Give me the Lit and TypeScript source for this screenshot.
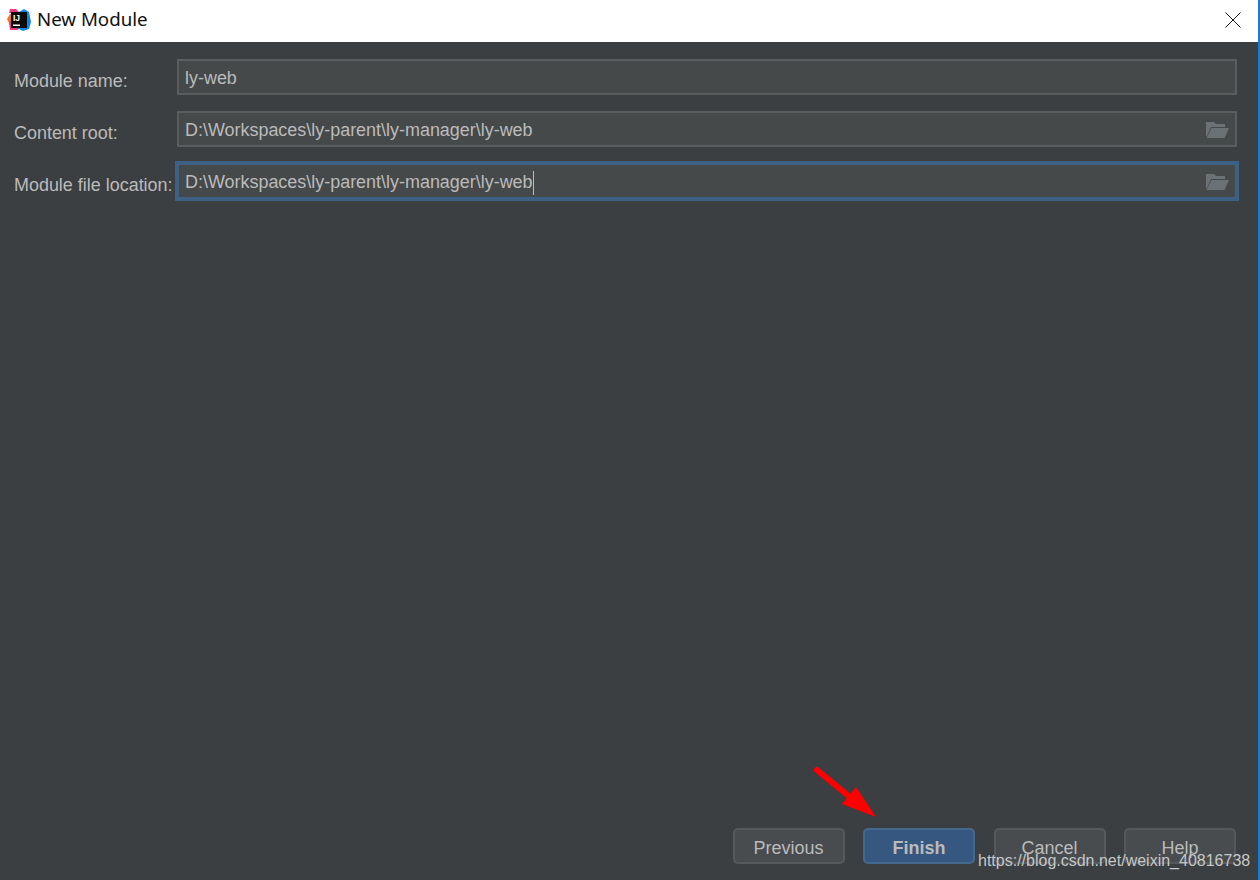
import { LitElement, html, css } from "lit";
import { customElement } from "lit/decorators.js";

const folder = html`<svg class="folder" width="24" height="18" viewBox="0 0 24 18">
  <path d="M1 1h8l2 2h9v3H6L2 15H1z" fill="#6b7276"/>
  <path d="M6.500 7H24l-4.500 10H1.500z" fill="#6b7276"/>
</svg>`;

@customElement("app-root")
export class AppRoot extends LitElement {
  static styles = css`
    :host {
      display: block;
      width: 1260px;
      height: 880px;
      position: relative;
      overflow: hidden;
      font-family: "Liberation Sans", Arial, sans-serif;
    }
    .window {
      width: 1258px;
      height: 880px;
      display: flex;
      flex-direction: column;
      background: #3c3f41;
      border-right: 2px solid #1a7bd0;
    }
    .titlebar {
      height: 42px;
      flex: none;
      background: #fff;
      display: flex;
      align-items: center;
      padding: 0 17px 6px 7px;
      gap: 6px;
      box-sizing: border-box;
      color: #111;
      font-family: "Noto Sans", sans-serif;
      font-size: 18.700px;
    }
    .logo { margin-top: 3px; flex: none; }
    .close { margin-left: auto; display: block; margin-top: 4px; }
    .form {
      display: grid;
      grid-template-columns: 163px 1060px;
      grid-auto-rows: min-content;
      padding: 17px 0 0 14px;
      row-gap: 16px;
      flex: 1;
      align-content: start;
    }
    label {
      color: #bbbbbb;
      font-size: 17.950px;
      align-self: center;
      padding-top: 9px;
      white-space: nowrap;
    }
    .field {
      height: 36px;
      box-sizing: border-box;
      border: 2px solid #5a5d5e;
      background: #45494a;
      color: #bbbbbb;
      font-size: 17.950px;
      display: flex;
      align-items: center;
      padding: 2px 6px 0 6px;
    }
    .field.focus {
      border: 4px solid #3d6185;
      height: 40px;
      margin: -2px -2px;
      padding: 3px 6px 0 6px;
    }
    .caret {
      display: inline-block;
      width: 1px;
      height: 24px;
      background: #bbbbbb;
    }
    .folder { margin-left: auto; margin-top: -1px; flex: none; }
    .buttons {
      display: flex;
      justify-content: flex-end;
      gap: 18.500px;
      padding: 0 22px 16px 0;
    }
    button {
      width: 112px;
      height: 36px;
      box-sizing: border-box;
      border: 2px solid #56595b;
      border-radius: 5px;
      background: #494c4e;
      color: #bbbbbb;
      font: 18px "Liberation Sans", Arial, sans-serif;
      padding: 4px 0 0;
    }
    button.primary {
      background: #365880;
      border-color: #43688c;
      font-weight: bold;
    }
    .arrow { position: absolute; left: 810px; top: 762px; }
    .mark {
      position: absolute;
      left: 978px;
      top: 851px;
      font-size: 16px;
      line-height: 20px;
      color: #c6c8c8;
      white-space: nowrap;
    }
  `;

  render() {
    return html`
      <div class="window">
        <div class="titlebar">
          <svg class="logo" width="24" height="24" viewBox="0 0 24 24">
            <path d="M0 11L3 6l5 2-1 8-4 1z" fill="#f0742c"/>
            <path d="M2 15l1 7h7l5-2-11-8z" fill="#ee3a78"/>
            <path d="M3 1h6l4 4H2z" fill="#ee3a78"/>
            <path d="M12 4l5-3 5 3 2 10-2 7-6 2-6-3z" fill="#1087e8"/>
            <rect x="4" y="4" width="16" height="16" fill="#0b0b0b"/>
            <rect x="6" y="16.500" width="7" height="1.500" fill="#fff"/>
            <text x="6" y="13" font-family="Liberation Sans" font-weight="bold" font-size="8.500" fill="#fff">IJ</text>
          </svg>
          <span>New Module</span>
          <svg class="close" width="16" height="16" viewBox="0 0 16 16">
            <path d="M.5.500l15 15M15.500.500l-15 15" stroke="#111" stroke-width="1" fill="none"/>
          </svg>
        </div>
        <div class="form">
          <label>Module name:</label>
          <div class="field">ly-web</div>
          <label>Content root:</label>
          <div class="field">D:\\Workspaces\\ly-parent\\ly-manager\\ly-web${folder}</div>
          <label>Module file location:</label>
          <div class="field focus">D:\\Workspaces\\ly-parent\\ly-manager\\ly-web<span class="caret"></span>${folder}</div>
        </div>
        <div class="buttons">
          <button>Previous</button>
          <button class="primary">Finish</button>
          <button>Cancel</button>
          <button>Help</button>
        </div>
      </div>
      <svg class="arrow" width="70" height="62" viewBox="0 0 70 62">
        <path d="M7 8L40 35" stroke="#ff0000" stroke-width="6" stroke-linecap="round" fill="none"/>
        <path d="M66 55L32 42 46 25z" fill="#ff0000"/>
      </svg>
      <div class="mark">https://blog.csdn.net/weixin_40816738</div>
    `;
  }
}
